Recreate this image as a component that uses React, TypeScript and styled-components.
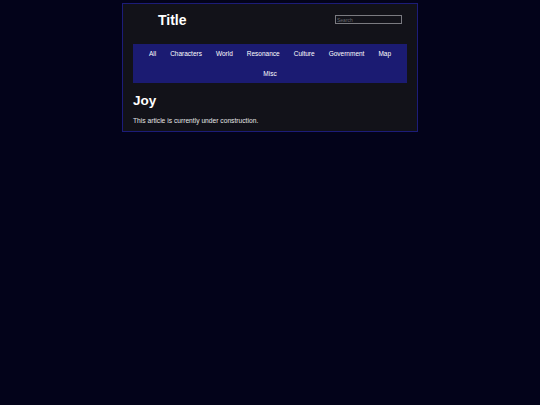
import * as React from "react";
import styled, { createGlobalStyle } from "styled-components";

const GlobalStyle = createGlobalStyle`
  html, body {
    margin: 0;
    padding: 0;
    background: #03031a;
    font-family: "Liberation Sans", Arial, sans-serif;
    color: #ffffff;
  }
`;

const Page = styled.div`
  padding-top: 3px;
`;

const Wrapper = styled.div`
  width: 296px;
  margin: 0 auto;
  box-sizing: border-box;
  background: #121219;
  border: 1px solid #1c1c78;
  padding: 0 10px 7px;
`;

const Header = styled.header`
  display: flex;
  align-items: center;
  justify-content: space-between;
  height: 31px;
  margin-bottom: 9px;
  padding: 0 5px 0 25px;
`;

const SiteTitle = styled.h1`
  margin: 0;
  font-size: 14px;
  font-weight: 700;
  color: #ffffff;
`;

const Search = styled.input`
  width: 67px;
  height: 9px;
  box-sizing: border-box;
  padding: 0 1px;
  background: #121219;
  border: 1px solid #7a7a80;
  color: #ddd;
  font-family: "Liberation Sans", Arial, sans-serif;
  font-size: 5px;
  outline: none;
  &::placeholder {
    color: #6a6a70;
  }
`;

const Nav = styled.nav`
  display: flex;
  flex-wrap: wrap;
  justify-content: center;
  background: #1b1b72;
`;

const NavItem = styled.a`
  display: block;
  padding: 0 7px;
  line-height: 19.5px;
  font-size: 6.5px;
  color: #ffffff;
  text-decoration: none;
`;

const Heading = styled.h2`
  margin: 9.5px 0 0;
  font-size: 13.5px;
  font-weight: 700;
  color: #ffffff;
`;

const Text = styled.p`
  margin: 9px 0 0;
  font-size: 6.7px;
  color: #e6e6e6;
`;

const links = [
  "All",
  "Characters",
  "World",
  "Resonance",
  "Culture",
  "Government",
  "Map",
  "Misc",
];

export default function App() {
  return (
    <>
      <GlobalStyle />
      <Page>
        <Wrapper>
          <Header>
            <SiteTitle>Title</SiteTitle>
            <Search placeholder="Search" />
          </Header>
          <Nav>
            {links.map((l) => (
              <NavItem key={l} href="#">
                {l}
              </NavItem>
            ))}
          </Nav>
          <Heading>Joy</Heading>
          <Text>This article is currently under construction.</Text>
        </Wrapper>
      </Page>
    </>
  );
}
